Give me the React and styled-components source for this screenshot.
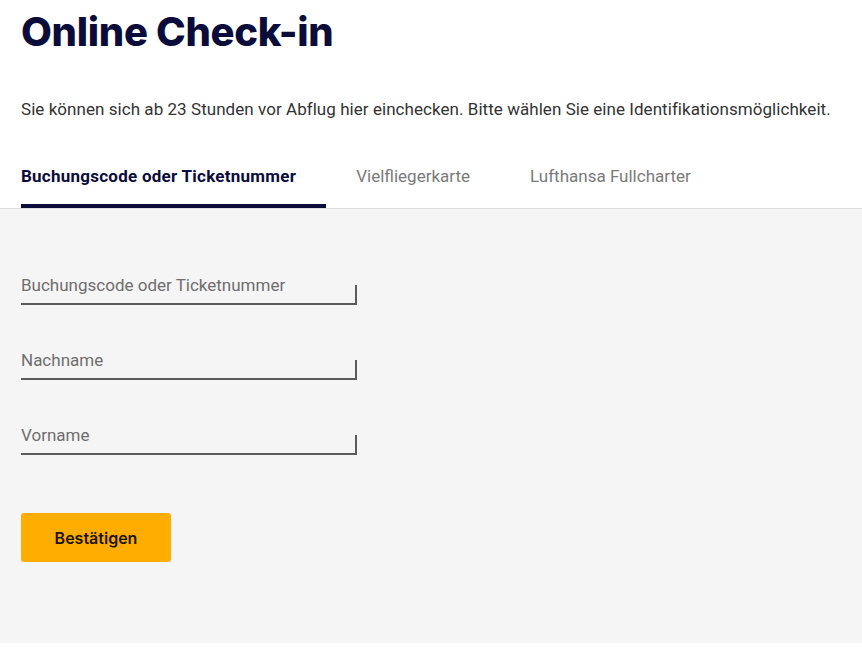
import React from "react";
import styled, { createGlobalStyle } from "styled-components";

const GlobalStyle = createGlobalStyle`
  html, body {
    margin: 0;
    padding: 0;
    background: #ffffff;
  }
  body {
    font-family: Roboto, "Liberation Sans", sans-serif;
  }
`;

const Page = styled.div`
  width: 862px;
  min-height: 647px;
  display: flex;
  flex-direction: column;
`;

const Header = styled.div`
  padding: 9px 21px 0;
`;

const Title = styled.h1`
  margin: 0;
  font-family: Inter, "Liberation Sans", sans-serif;
  font-weight: 800;
  font-size: 40px;
  line-height: 46px;
  letter-spacing: -0.3px;
  color: #0b0c3a;
`;

const Intro = styled.p`
  margin: 44px 0 0;
  font-size: 17px;
  line-height: 20px;
  letter-spacing: 0.05px;
  color: #333333;
`;

const TabBar = styled.div`
  display: flex;
  margin-top: 35px;
  padding: 0 21px;
  border-bottom: 1px solid #dddddd;
`;

const Tab = styled.div`
  padding: 0 30px 6px ${(p) => (p.first ? "0" : "30px")};
  height: 54px;
  box-sizing: border-box;
  display: flex;
  align-items: center;
  font-size: 17px;
  font-weight: ${(p) => (p.active ? 700 : 400)};
  letter-spacing: ${(p) => (p.active ? "0.25px" : "0")};
  color: ${(p) => (p.active ? "#0b0c3a" : "#7a7a7a")};
  border-bottom: 4px solid ${(p) => (p.active ? "#0b0c3a" : "transparent")};
`;

const Panel = styled.div`
  background: #f5f5f5;
  padding: 66px 21px 81px;
  display: flex;
  flex-direction: column;
  align-items: flex-start;
`;

const Field = styled.div`
  position: relative;
  width: 336px;
  height: 28px;
  border-bottom: 2px solid #5b5b5b;
  margin-bottom: 45px;
  font-size: 17px;
  color: #6e6e6e;
  line-height: 20px;

  &::after {
    content: "";
    position: absolute;
    right: 0;
    bottom: 0;
    width: 2px;
    height: 18px;
    background: #5b5b5b;
  }
`;

const Button = styled.button`
  margin-top: 13px;
  width: 150px;
  height: 49px;
  border: none;
  border-radius: 3px;
  background: #ffad00;
  color: #1c1414;
  font-family: Inter, "Liberation Sans", sans-serif;
  font-weight: 600;
  font-size: 16px;
`;

const Tail = styled.div`
  height: 4px;
  background: #ffffff;
`;

export default function App() {
  return (
    <Page>
      <GlobalStyle />
      <Header>
        <Title>Online Check-in</Title>
        <Intro>
          Sie können sich ab 23 Stunden vor Abflug hier einchecken. Bitte wählen Sie eine Identifikationsmöglichkeit.
        </Intro>
      </Header>
      <TabBar>
        <Tab first active>Buchungscode oder Ticketnummer</Tab>
        <Tab>Vielfliegerkarte</Tab>
        <Tab>Lufthansa Fullcharter</Tab>
      </TabBar>
      <Panel>
        <Field>Buchungscode oder Ticketnummer</Field>
        <Field>Nachname</Field>
        <Field>Vorname</Field>
        <Button>Bestätigen</Button>
      </Panel>
      <Tail />
    </Page>
  );
}
